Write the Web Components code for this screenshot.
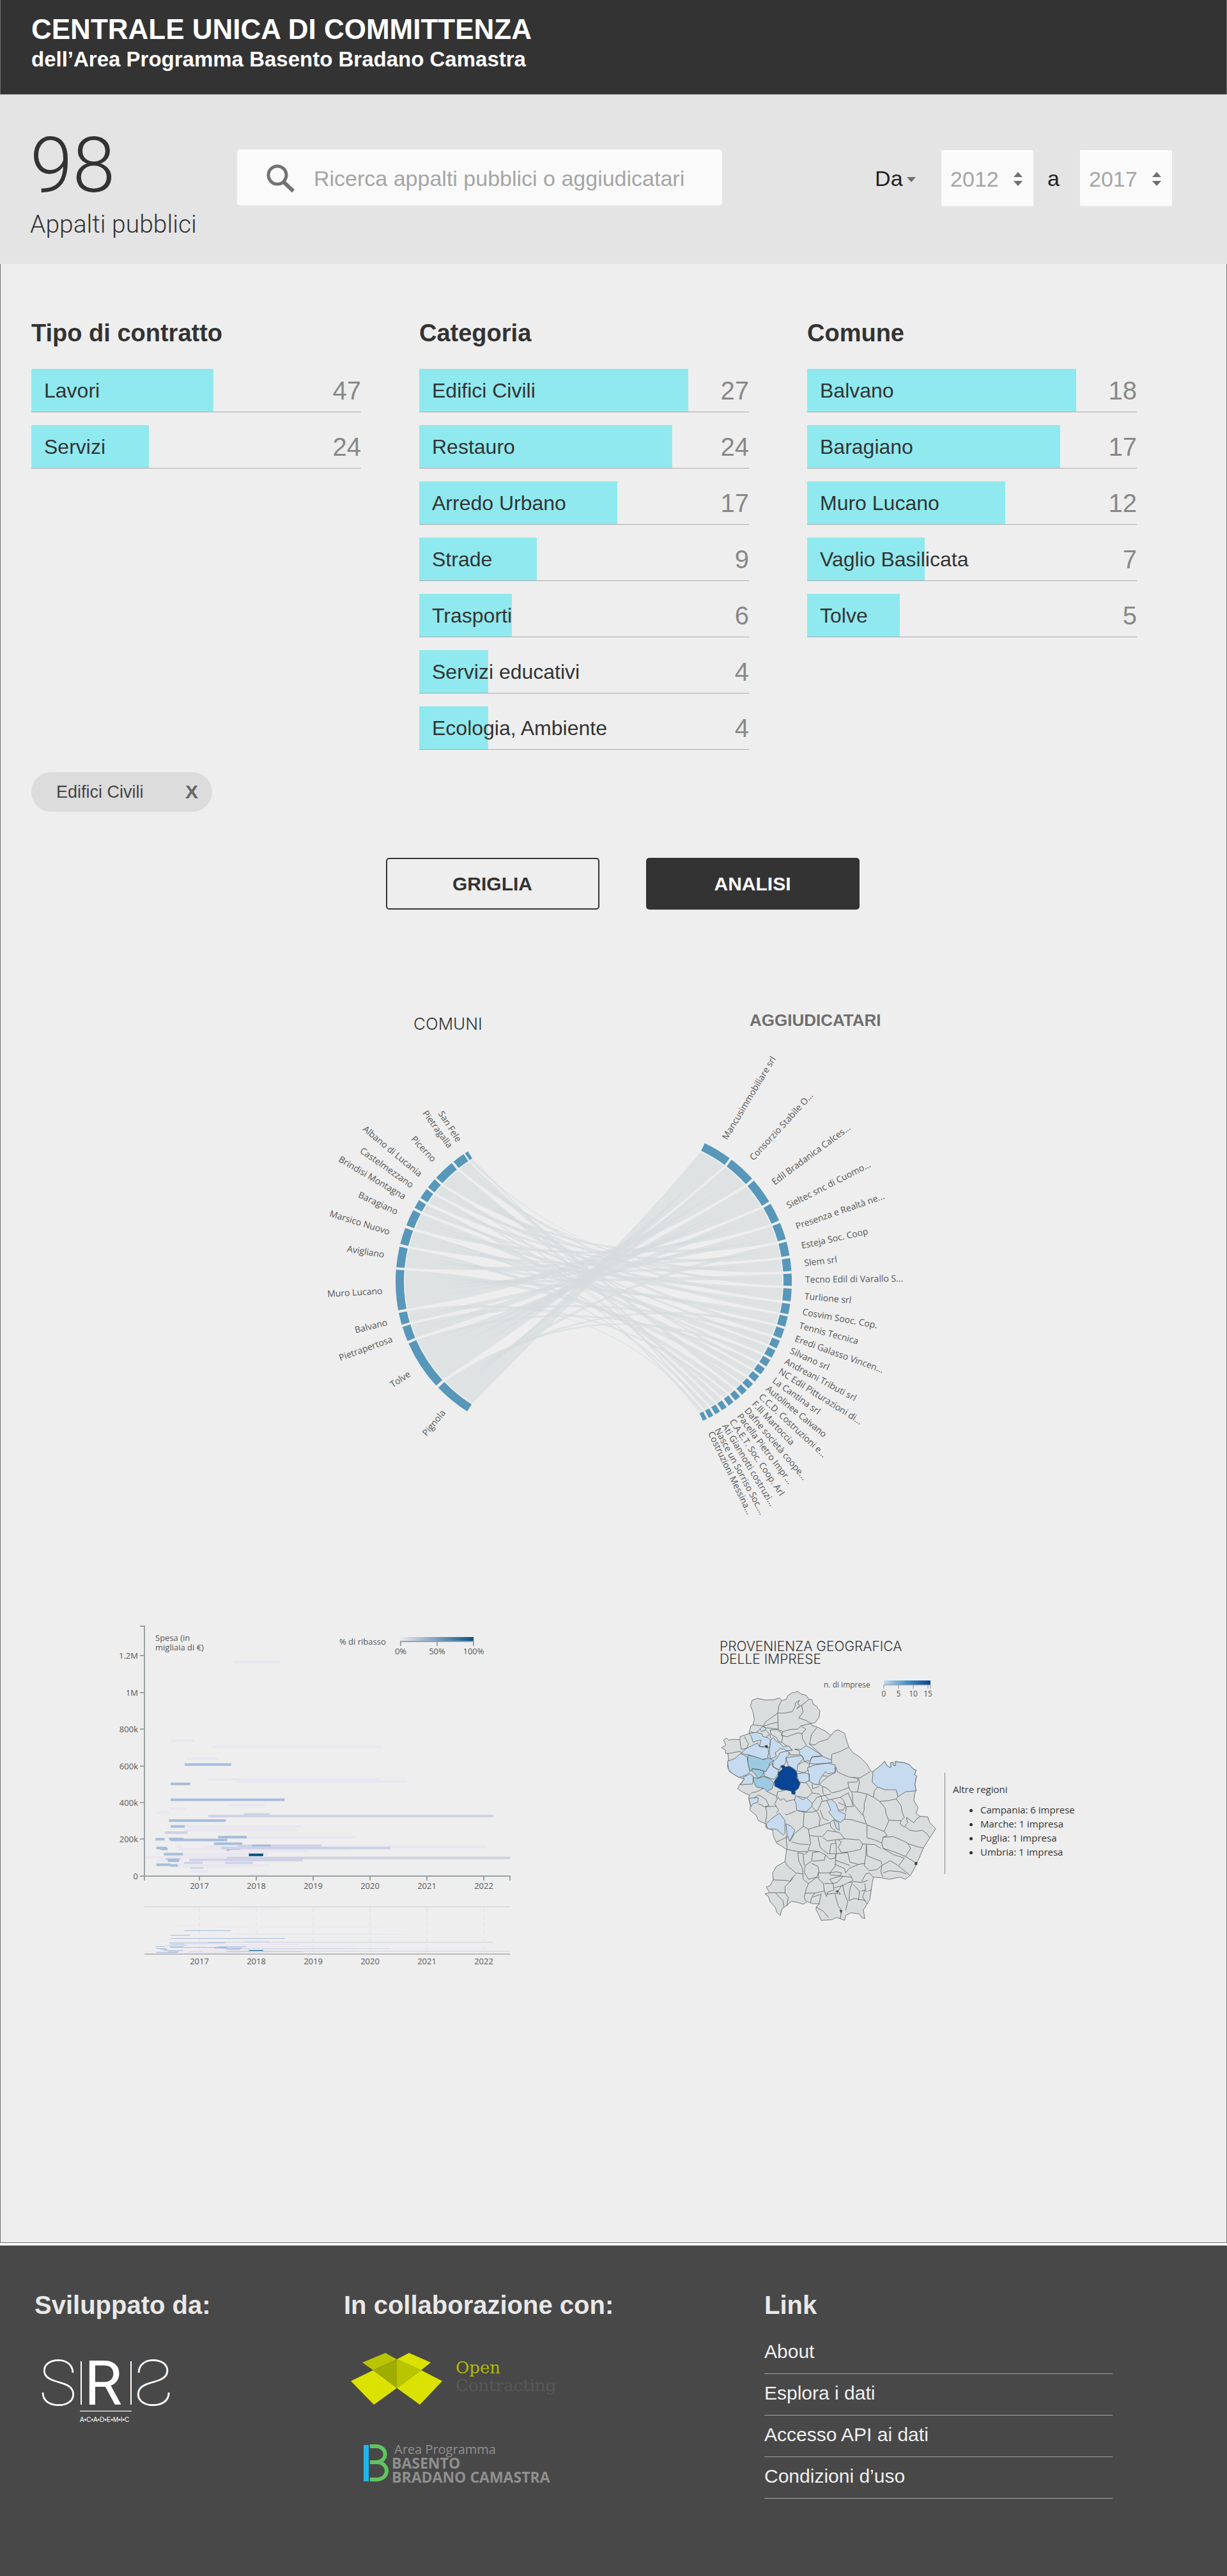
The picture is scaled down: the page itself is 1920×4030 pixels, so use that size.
<!DOCTYPE html>
<html lang="it">
<head>
<meta charset="utf-8">
<meta name="viewport" content="width=device-width, initial-scale=1">
<title>Centrale Unica di Committenza</title>
<style>
  body { margin: 0; background: #fff; color: #333; font-family: "Liberation Sans", Arial, sans-serif; }
</style>
</head>
<body>
<cuc-page>
  <cuc-header>
    <span slot="title">CENTRALE UNICA DI COMMITTENZA</span>
    <span slot="subtitle">dell’Area Programma Basento Bradano Camastra</span>
  </cuc-header>
  <stats-bar>
    <stat-figure slot="stat" value="98">Appalti pubblici</stat-figure>
    <search-box slot="search" placeholder="Ricerca appalti pubblici o aggiudicatari"></search-box>
    <year-range slot="range" from="2012" to="2017"></year-range>
  </stats-bar>
  <cuc-main>
    <facet-list slot="facets" heading="Tipo di contratto">
      <facet-row count="47" share="55.2">Lavori</facet-row>
      <facet-row count="24" share="35.7">Servizi</facet-row>
    </facet-list>
    <facet-list slot="facets" heading="Categoria">
      <facet-row count="27" share="81.6">Edifici Civili</facet-row>
      <facet-row count="24" share="76.7">Restauro</facet-row>
      <facet-row count="17" share="60.1">Arredo Urbano</facet-row>
      <facet-row count="9" share="35.7">Strade</facet-row>
      <facet-row count="6" share="28.1">Trasporti</facet-row>
      <facet-row count="4" share="20.9">Servizi educativi</facet-row>
      <facet-row count="4" share="20.9">Ecologia, Ambiente</facet-row>
    </facet-list>
    <facet-list slot="facets" heading="Comune">
      <facet-row count="18" share="81.6">Balvano</facet-row>
      <facet-row count="17" share="76.7">Baragiano</facet-row>
      <facet-row count="12" share="60.1">Muro Lucano</facet-row>
      <facet-row count="7" share="35.7">Vaglio Basilicata</facet-row>
      <facet-row count="5" share="28.1">Tolve</facet-row>
    </facet-list>
    <filter-chip slot="chips">Edifici Civili</filter-chip>
    <view-button slot="views">GRIGLIA</view-button>
    <view-button slot="views" active>ANALISI</view-button>
    <chord-chart slot="chord"></chord-chart>
    <spend-chart slot="panels"></spend-chart>
    <origin-map slot="panels"></origin-map>
  </cuc-main>
  <cuc-footer></cuc-footer>
</cuc-page>

<script>
const define = (name, css, html, ready) => {
  const template = document.createElement('template');
  template.innerHTML = `<style>*{box-sizing:border-box}:host{display:block}${css}</style>${html}`;
  customElements.define(name, class extends HTMLElement {
    constructor() {
      super();
      this.attachShadow({ mode: 'open' }).append(template.content.cloneNode(true));
    }
    connectedCallback() { if (ready) ready(this, this.shadowRoot); }
  });
};

define('cuc-page', `:host{display:flex;flex-direction:column}`, `<slot></slot>`);

define('cuc-header', `
  header{background:#333;color:#fff;border:1px solid #707070;border-top:0;padding:21px 48px 32px;font-weight:700}
  h1,p{margin:0;font-weight:700}
  h1{font-size:44px;line-height:50px}
  p{font-size:33px;line-height:44px}`,
  `<header><h1><slot name="title"></slot></h1><p><slot name="subtitle"></slot></p></header>`);

define('stats-bar', `
  section{display:flex;align-items:flex-start;background:#e4e4e4;padding:51px 86px 38px 47px}
  .stat{flex:0 0 324px}
  .search{flex:0 1 759px;padding-top:35px}
  .range{margin-left:auto;padding-top:36px}`,
  `<section><div class="stat"><slot name="stat"></slot></div>
   <div class="search"><slot name="search"></slot></div>
   <div class="range"><slot name="range"></slot></div></section>`);

define('stat-figure', `
  :host{font-family:Roboto,"Liberation Sans",sans-serif;font-weight:300;color:#333}
  .value{font-size:120px;line-height:120px}
  .label{font-size:39px;line-height:48px;margin-top:8px;white-space:nowrap}`,
  `<div class="value"></div><div class="label"><slot></slot></div>`,
  (el, root) => { root.querySelector('.value').textContent = el.getAttribute('value'); });

define('search-box', `
  form{display:flex;align-items:center;gap:28px;height:88px;padding:0 12px 0 46px;background:#fafafa;
    border-top:2px solid #fff;border-bottom:1px solid #ededed;border-radius:5px}
  svg{flex:none;display:block}
  input{appearance:none;flex:1;min-width:0;border:0;padding:0;background:none;outline:0;color:#333;
    font:34px/40px "Liberation Sans",Arial,sans-serif}
  input::placeholder{color:#a5a5a5;opacity:1}`,
  `<form role="search"><svg width="46" height="44" viewBox="0 0 46 44" fill="none" stroke="#727272">
     <circle cx="17" cy="17" r="14" stroke-width="5"/><path d="M27 28 42 42" stroke-width="6"/></svg>
   <input type="search" aria-label="Ricerca"></form>`,
  (el, root) => { root.querySelector('input').placeholder = el.getAttribute('placeholder'); });

define('year-range', `
  :host{font-size:34px;color:#222}
  form{display:flex;align-items:center}
  .mode{position:relative;margin-right:40px}
  select{appearance:none;border:0;background:none;margin:0;padding:0 20px 0 0;color:inherit;
    font:34px/40px "Liberation Sans",Arial,sans-serif}
  .mode svg{position:absolute;right:0;top:18px}
  .year{display:flex;align-items:center;justify-content:space-between;width:144px;height:88px;
    padding:0 17px 0 14px;background:#fafafa;border-top:2px solid #fff;border-bottom:1px solid #ededed;border-radius:2px}
  input{appearance:textfield;width:80px;border:0;padding:0;margin:0;background:none;color:#a5a5a5;
    font:34px/40px "Liberation Sans",Arial,sans-serif}
  input::-webkit-inner-spin-button{appearance:none;margin:0}
  label{padding:0 32px 0 22px}
  svg{display:block;fill:#707070}`,
  `<form><div class="mode"><select aria-label="Intervallo"><option>Da</option></select>
     <svg width="14" height="8"><path d="M0 0H14L7 8Z"/></svg></div>
   <div class="year"><input type="number" class="from" aria-label="Anno iniziale">
     <svg width="14" height="22"><path d="M0 8H14L7 0ZM0 14H14L7 22Z"/></svg></div>
   <label for="to">a</label>
   <div class="year"><input type="number" class="to" id="to">
     <svg width="14" height="22"><path d="M0 8H14L7 0ZM0 14H14L7 22Z"/></svg></div></form>`,
  (el, root) => {
    root.querySelector('.from').value = el.getAttribute('from');
    root.querySelector('.to').value = el.getAttribute('to');
  });

define('cuc-main', `
  main{background:#eee;border:1px solid #707070;border-top:0;padding:86px 0 418px}
  .facets{display:grid;grid-template-columns:repeat(3,1fr);gap:91px;padding:0 140px 0 48px}
  .chips{display:flex;gap:20px;margin:35px 48px 0}
  .views{display:flex;justify-content:center;gap:73px;margin-top:72px;padding-left:28px}
  .chord{margin-top:137px}
  .panels{display:flex;align-items:flex-start;gap:295px;margin-top:130px;padding-left:169px}`,
  `<main><div class="facets"><slot name="facets"></slot></div>
   <div class="chips"><slot name="chips"></slot></div>
   <div class="views"><slot name="views"></slot></div>
   <div class="chord"><slot name="chord"></slot></div>
   <div class="panels"><slot name="panels"></slot></div></main>`);

define('facet-list', `
  h2{margin:0 0 34px;font-size:38px;line-height:44px}
  .rows{display:flex;flex-direction:column;gap:20px}`,
  `<section><h2></h2><div class="rows"><slot></slot></div></section>`,
  (el, root) => { root.querySelector('h2').textContent = el.getAttribute('heading'); });

define('facet-row', `
  button{display:flex;align-items:center;justify-content:space-between;width:100%;height:68px;margin:0;
    padding:0 0 0 20px;border:0;border-bottom:1px solid #aaa;color:#333;cursor:pointer;text-align:left;
    background:linear-gradient(#90e9ee,#90e9ee) no-repeat 0 0/var(--share) 100%;
    font:32px/40px "Liberation Sans",Arial,sans-serif}
  .count{font-size:40px;color:#888}`,
  `<button type="button"><span><slot></slot></span><span class="count"></span></button>`,
  (el, root) => {
    root.querySelector('.count').textContent = el.getAttribute('count');
    el.style.setProperty('--share', el.getAttribute('share') + '%');
  });

define('filter-chip', `
  .chip{display:flex;align-items:center;justify-content:space-between;width:283px;height:62px;
    padding:0 22px 0 39px;border-radius:31px;background:#dcdcdc;color:#444;font-size:27px;line-height:32px}
  button{border:0;background:none;padding:0;margin:0;color:#666;cursor:pointer;
    font:700 30px/32px "Liberation Sans",Arial,sans-serif}`,
  `<div class="chip"><span><slot></slot></span><button type="button" aria-label="Rimuovi">X</button></div>`);

define('view-button', `
  button{display:block;width:334px;height:81px;margin:0;padding:0;border:2px solid #333;border-radius:5px;
    background:none;color:#333;cursor:pointer;font:700 30px/40px "Liberation Sans",Arial,sans-serif}
  :host([active]) button{background:#333;color:#fff}`,
  `<button type="button"><slot></slot></button>`);

/* Two facing arcs, one for the municipalities and one for the contractors, joined by ribbons. */
const TOWNS = [
  ['San Fele', 31.9, 33.2], ['Pietragalla', 33.8, 38.5], ['Picerno', 39.4, 47.3], ['Albano di Lucania', 48.2, 52.1],
  ['Castelmezzano', 52.9, 56.9], ['Brindisi Montagna', 57.9, 61.2], ['Baragiano', 62.2, 68.4],
  ['Marsico Nuovo', 69.5, 75.8], ['Avigliano', 76.8, 84.6], ['Muro Lucano', 85.5, 100.8], ['Balvano', 101.8, 106.3],
  ['Pietrapertosa', 107.2, 112.8], ['Tolve', 113.8, 132.7], ['Pignola', 133.8, 147.8]];
const FIRMS = [
  ['Mancusimmobiliare srl', 25.6, 36.5], ['Consorzio Stabile O...', 37.4, 47.8], ['Edil Bradanica Calces...', 48.8, 58.5],
  ['Sieltec snc di Cuomo...', 59.5, 66.5], ['Presenza e Realtà ne...', 67.5, 73.9], ['Esteja Soc. Coop', 74.9, 80.2],
  ['Slem srl', 81.2, 86], ['Tecno Edil di Varallo S...', 87, 91.6], ['Turlione srl', 92.6, 97.4],
  ['Cosvim Sooc. Cop.', 98.4, 102.3], ['Tennis Tecnica', 103.2, 107.1], ['Eredi Galasso Vincen...', 108, 111.7],
  ['Silvano srl', 112.7, 115.8], ['Andreani Tributi srl', 116.7, 119.8], ['NC Edil Pitturazioni di...', 120.7, 123.6],
  ['La Cantina srl', 124.5, 127.2], ['Autolinee Caivano', 128.1, 130.7], ['C.C.D. Costruzioni e...', 131.7, 134.2],
  ['F.lli Martoccia', 135.1, 137.5], ['Dafne società coope...', 138.5, 140.8], ['Pacella Pietro Impr...', 141.7, 143.9],
  ['C.A.E.T. Soc. Coop. Arl', 144.9, 147], ['Ati Giannotti costruzi...', 147.9, 149.9],
  ['Nasce un Sorriso Soc....', 150.8, 152.7], ['Costruzioni Messina...', 153.5, 155.1]];
const FLOWS = [
  [[13, 7], [12, 3.9]], [[12, 5], [9, 4], [13, 1.4]], [[12, 4], [9, 3], [11, 2.7]], [[12, 3], [8, 2], [6, 2]],
  [[10, 2], [9, 2.4], [2, 2]], [[13, 2], [7, 1.3], [3, 2]], [[8, 2], [4, 1.9], [1, 1]], [[9, 2], [2, 1.6], [0, .6]],
  [[7, 2], [1, 1.4], [5, 1.4]], [[6, 2], [3, 1.9]], [[9, 2], [8, 1.9]], [[13, 1.6], [2, 2.3]], [[11, 1.5], [4, 1.6]],
  [[7, 3.1]], [[13, 1.4], [5, 1.5]], [[2, 1.3], [12, 1.4]], [[6, 2.6]], [[9, 2.5]], [[1, 2.4]], [[8, 2.3]],
  [[10, 1.2], [7, 1]], [[2, 2.1]], [[3, 1], [4, 1]], [[8, 1], [0, .9]], [[10, .6], [5, 1]]];

define('chord-chart', `
  svg{display:block;margin:0 auto;max-width:100%}
  .arc{fill:#5797ba}
  .ribbon{fill:#d6dcde;opacity:.66}
  .names{font:14px "Open Sans",sans-serif;fill:#555}
  .side{font:300 26px Inter,sans-serif;fill:#333}
  .bold{font:700 26px "Liberation Sans",Arial,sans-serif;fill:#6f6f6f}`,
  `<svg width="960" height="840" viewBox="480 1560 960 840" role="img" aria-label="Comuni e aggiudicatari"></svg>`,
  (el, root) => {
    const left = { x: 859, y: 2005, s: -1 }, right = { x: 999, y: 2005, s: 1 };
    const at = (c, deg, r) => {
      const a = deg * Math.PI / 180;
      return (c.x + c.s * Math.sin(a) * r).toFixed(1) + ' ' + (c.y - Math.cos(a) * r).toFixed(1);
    };
    const arc = (c, [, a, b]) => {
      const out = c.s > 0 ? 1 : 0;
      return `<path class="arc" d="M${at(c, a, 240)}A240 240 0 0 ${out} ${at(c, b, 240)}L${at(c, b, 227)}A227 227 0 0 ${1 - out} ${at(c, a, 227)}Z"/>`;
    };
    const label = (c, [name, a, b]) => {
      const turn = c.s * ((a + b) / 2 - 90);
      const [x, y] = at(c, (a + b) / 2, 261).split(' ');
      return `<text x="${x}" y="${y}" dy="5" text-anchor="${c.s > 0 ? 'start' : 'end'}" transform="rotate(${turn.toFixed(1)} ${x} ${y})">${name}</text>`;
    };
    const links = FLOWS.flatMap((list, firm) => list.map(([town, size]) => ({ firm, town, size })));
    const spread = (arcs, key, other) => arcs.forEach(([, a, b], i) => {
      const own = links.filter(l => l[key] === i).sort((p, q) => q[other] - p[other]);
      const total = own.reduce((sum, l) => sum + l.size, 0);
      let from = a;
      own.forEach(l => { const to = from + (b - a) * l.size / total; l[key + 'Span'] = [from, to]; from = to; });
    });
    spread(TOWNS, 'town', 'firm');
    spread(FIRMS, 'firm', 'town');
    const ribbons = links.map(l => {
      const [a, b] = l.townSpan, [c, d] = l.firmSpan, mid = 'Q929 2003 ';
      return `<path class="ribbon" d="M${at(left, a, 225)}${mid}${at(right, c, 225)}A225 225 0 0 1 ${at(right, d, 225)}${mid}${at(left, b, 225)}A225 225 0 0 1 ${at(left, a, 225)}Z"/>`;
    });
    root.querySelector('svg').innerHTML = ribbons.join('') +
      TOWNS.map(t => arc(left, t)).join('') + FIRMS.map(f => arc(right, f)).join('') +
      `<g class="names">${TOWNS.map(t => label(left, t)).join('')}${FIRMS.map(f => label(right, f)).join('')}</g>
       <text class="side" x="647" y="1611">COMUNI</text><text class="bold" x="1173" y="1605">AGGIUDICATARI</text>`;
  });

/* Contracts as bars: start, end, height on the plot grid, tone. */
const BARS = [
  [475,643,217,0],[247,333,549,0],[397,1011,575,0],[304,420,625,0],[297,465,650,2],[383,1003,713,0],[483,1099,722,0],
  [247,317,732,2],[247,658,799,2],[451,587,821,0],[242,303,836,0],[194,243,853,0],[511,604,861,1],[383,1410,868,1],
  [241,446,887,2],[297,716,912,0],[247,297,912,2],[293,704,928,0],[225,308,938,1],[505,915,959,0],[418,521,957,2],
  [192,225,966,2],[241,293,965,2],[247,451,969,2],[403,505,985,2],[262,290,996,0],[365,1387,998,0],[487,790,994,1],
  [540,608,994,2],[278,890,1008,0],[448,497,1010,2],[428,1041,1003,1],[195,231,1003,2],[210,236,1007,2],
  [459,740,1016,0],[290,595,1029,0],[222,291,1029,2],[529,581,1032,3],[195,290,1056,0],[236,277,1057,2],[228,282,1046,2],
  [152,448,1042,0],[448,1472,1045,1],[314,723,1054,1],[295,362,1067,1],[443,543,1067,1],[362,443,1062,0],
  [195,247,1074,2],[246,273,1077,2],[273,603,1076,0],[317,365,1084,2],[295,500,1081,0],[314,382,1102,0],[528,595,1115,0]];

define('spend-chart', `
  :host{flex:none}
  svg{display:block;font:13px "Open Sans",sans-serif;fill:#555}
  .axis{fill:none;stroke:#9aa2a3;stroke-width:2}
  .t0{fill:#e9e6f1}.t1{fill:#cfd1e6}.t2{fill:#a6bddb}.t3{fill:#045382}
  .end{text-anchor:end}.mid{text-anchor:middle}`,
  `<svg width="650" height="560" viewBox="170 2530 650 560" role="img" aria-label="Spesa nel tempo"></svg>`,
  (el, root) => {
    const x = v => 160 + v / 2.306, y = v => 2520 + v / 2.703;
    const years = [2017, 2018, 2019, 2020, 2021, 2022].map((n, i) => [n, 312 + 89 * i]);
    const ticks = [['1.2M', 2590], ['1M', 2648], ['800k', 2705], ['600k', 2763], ['400k', 2820], ['200k', 2877], ['0', 2935]];
    const bar = (a, b, t, top, h) => `<rect class="t${t}" x="${x(a).toFixed(1)}" y="${top}" width="${((b - a) / 2.306).toFixed(1)}" height="${h}"/>`;
    const big = BARS.map(([a, b, v, t]) => bar(a, b, t, (y(v) - 2).toFixed(1), 4));
    const small = BARS.map(([a, b, v, t]) => bar(a, b, t, Math.round(2985 + (y(v) - 2600) * .218), 1));
    root.querySelector('svg').innerHTML = `
      <defs><linearGradient id="tone"><stop stop-color="#ece7f2"/><stop offset=".5" stop-color="#7d9fc2"/><stop offset="1" stop-color="#045382"/></linearGradient></defs>
      ${big.join('')}
      <path class="axis" d="M219 2544H226V2942M219 2935H798V2942${ticks.slice(0, 6).map(t => `M219 ${t[1]}H226`).join('')}${years.map(n => `M${n[1]} 2935V2942`).join('')}"/>
      ${ticks.map(t => `<text class="end" x="216" y="${t[1] + 5}">${t[0]}</text>`).join('')}
      ${years.map(n => `<text class="mid" x="${n[1]}" y="2955">${n[0]}</text><text class="mid" x="${n[1]}" y="3073">${n[0]}</text>`).join('')}
      <text x="243" y="2567">Spesa (in</text><text x="243" y="2582">migliaia di €)</text>
      <text x="531" y="2573">% di ribasso</text>
      <rect x="627" y="2561" width="114" height="6" fill="url(#tone)"/>
      <path class="axis" d="M627 2575V2568H741V2575M684 2568V2575"/>
      <text class="mid" x="627" y="2588">0%</text><text class="mid" x="684" y="2588">50%</text><text class="mid" x="741" y="2588">100%</text>
      <path d="M226 2983H798" stroke="#ddd" stroke-width="2"/>
      <path d="${years.map(n => `M${n[1]} 2984V3057`).join('')}" stroke="#dfe2e2" stroke-dasharray="7 5"/>
      ${small.join('')}
      <path d="M226 3057H798" stroke="#bbb" stroke-width="2"/>`;
  });

define('origin-map', `
  :host{flex:none;margin-top:36px;color:#333}
  h3{margin:0 0 14px;padding-left:11px;font:300 21px/20px Inter,sans-serif;color:#333}
  .row{display:flex;align-items:flex-start}
  svg{display:block;font:12px "Open Sans",sans-serif;fill:#555}
  .mid{text-anchor:middle}
  g{stroke:#555a5c;stroke-width:3;stroke-linejoin:round;stroke-opacity:.8}
  .land{fill:#d9dddd}.few{fill:#c6dbef}.some{fill:#9ecae1}.many{fill:#084594}.edge{fill:none}
  aside{margin:153px 0 0 3px;padding:15px 0 24px 12px;border-left:1px solid #888;
    font:15px/22px "Open Sans",sans-serif}
  p{margin:0 0 10px}
  ul{margin:0;padding-left:43px}`,
  `<h3>PROVENIENZA GEOGRAFICA<br>DELLE IMPRESE</h3>
  <div class="row">
  <svg width="360" height="395" viewBox="0 0 360 395" role="img" aria-label="Mappa della Basilicata">
    <defs><linearGradient id="blues"><stop stop-color="#c6dbef"/><stop offset=".5" stop-color="#4292c6"/><stop offset="1" stop-color="#084594"/></linearGradient></defs>
    <text x="174" y="20">n. di imprese</text>
    <rect x="268" y="9" width="73" height="7" fill="url(#blues)"/>
    <path d="M268 22V16H341V22M291 16V22M314 16V22M337 16V22" fill="none" stroke="#8a9496"/>
    <text class="mid" x="268" y="34">0</text><text class="mid" x="291" y="34">5</text><text class="mid" x="314" y="34">10</text><text class="mid" x="337" y="34">15</text>
    <g transform="translate(0 15) scale(.33333)">
      <path class="land" d="M190 190 196 165 190 130 178 100 186 75 210 66 250 74 290 72 312 64 325 76 347 70 352 55 375 38 386 40 398 32 415 45 440 52 452 70 466 72 472 92 490 104 495 115 504 124 500 155 482 180 462 184 466 193 490 200 530 220 556 240 572 220 588 214 620 230 630 265 640 295 660 322 690 340 725 375 743 408 753 410 790 380 808 362 818 380 830 390 838 388 835 370 848 366 850 382 860 380 858 362 880 366 900 368 925 378 940 396 956 404 948 422 958 430 950 470 955 500 950 510 945 545 965 580 955 605 975 620 1010 622 1020 650 1048 678 1020 720 990 768 968 820 955 850 930 895 905 915 880 905 830 915 790 908 755 905 750 930 745 965 738 1010 720 1040 708 1060 715 1100 700 1095 690 1078 650 1072 625 1085 620 1108 595 1098 580 1095 560 1105 510 1108 500 1085 485 1055 490 1040 502 1030 470 1030 445 1020 425 1032 405 1025 370 1018 345 1040 325 1055 318 1085 302 1070 295 1048 270 1020 262 995 246 984 268 978 252 952 270 945 285 918 282 885 300 855 340 832 348 775 300 745 285 710 283 685 250 672 250 655 215 640 205 615 175 590 178 570 170 535 172 520 140 505 118 490 128 470 150 445 120 435 80 410 70 385 75 350 72 325 62 325 60 308 42 298 62 285 52 262 65 252 75 262 100 258 128 260 130 245 170 232 175 215 180 195Z"/>
      <path class="edge" d="M325 76 312 100 306 135 308 210M306 135 340 135 375 128 388 102 388 88 408 75 400 92 408 98 395 115 418 98 440 82 452 70M418 98 425 130 405 158 440 170 462 184M240 192 250 175 285 150 306 135M240 196 275 185 308 178M190 190 240 196 250 204 305 210 330 222 365 212 400 210 415 195 462 184M178 222 200 230 222 212M330 222 322 240 350 246 400 228 420 232 438 210 415 195M420 232 422 255 440 285M490 202 465 235 455 280 480 285 500 270 540 258 556 240M455 280 515 335M558 355 560 328 600 315 640 295M270 215 275 235 300 250 310 268 325 272 330 240 320 225 300 212ZM250 215 268 235 250 248M270 235 272 252M325 272 350 290 378 310M128 260 135 305 160 300 168 280 150 245M72 325 130 315 136 325M362 318 365 332 408 330M400 378 430 362 455 372 450 400 430 415 400 408M575 415 580 388 585 410 615 425 640 435 660 438 690 440 740 410M502 470 515 455 545 430 575 415M515 430 540 430M500 470 540 490 560 510 600 500 640 485 635 460 680 458M660 438 680 440 682 455M685 440 690 460 680 505 650 505 640 485M680 505 725 515 755 530 760 500 775 482M755 530 785 550 830 545 862 538 870 528M862 538 885 570 890 600 900 625 885 640 828 638M785 550 810 580 815 610 828 640 805 690M725 515 712 560 712 590 705 605 720 650 725 660 805 690M655 510 660 560 680 585 705 615M625 600 628 575 665 572M635 510 650 540 660 570M600 632 650 635 720 655M725 660 725 720 760 730 795 745 800 718 820 710 805 690M910 625 915 650 900 670 880 655 885 640M910 625 945 650 960 630 975 620M905 668 925 685 955 690 985 685 1005 700 1020 720M800 718 850 715 895 735 915 745 930 770 905 808 850 785 800 770 795 745M918 748 960 762 990 768M905 808 950 835M722 750 760 752 790 770M722 755 725 805 790 830 795 845M875 850 900 815 850 800 800 770M795 850 835 828 870 850 925 895M800 885 830 875 880 880 910 890M795 850 790 880 800 905M735 885 755 905M735 875 770 870 795 850M450 680 500 665 550 650 568 636M425 665 450 680 455 710 515 715 540 685 560 690 595 695 620 725M552 650 555 670 580 690M620 725 575 730 540 735 518 720M575 730 580 745 555 750 550 795M620 725 690 730 705 750 695 775 650 785 605 790 590 765 605 740 590 730M722 750 705 750M495 718 505 765 540 795 580 795 635 790M580 745 580 795M455 710 460 745 448 780 500 785M350 775 400 785 448 785M372 740 410 750 452 752M365 735 385 700 425 668 430 600 395 592M340 610 350 612 390 595M430 600 470 600 495 590M468 575 495 605 505 630 500 665M468 560 490 530 510 525 515 545 495 590M505 590 520 630 545 640M468 510 500 515 510 525 555 515M535 545 515 550M515 480 520 515 545 540M558 540 600 530 640 508M600 530 615 545 625 570M592 590 615 590 625 570 590 555M412 460 440 462 460 490 468 510 440 535 402 525M455 425 468 465 470 490 500 480M300 535 305 505 345 496M388 540 345 550 335 535 320 545 308 530 292 560 300 575 310 590 300 605M245 575 300 572M215 518 250 540 265 570 245 575 215 560M250 575 255 610 248 655M300 525 270 510 255 503M215 520 190 535M172 520 185 508 205 505 240 488M300 740 355 715M345 710 350 775M340 832 350 850 390 885 425 890M400 790 405 830 420 860 425 890M400 790 425 795 430 850M448 785 430 800M470 790 465 830 435 850 430 880 450 915 490 905 500 880 495 855 465 840M470 790 500 785 530 800 525 825 470 830M530 800 550 820 575 815 580 795M575 845 620 865 625 885M580 795 575 855 550 885 495 885M635 790 645 835 685 845 715 840M575 825 645 850M722 750 720 800 712 850 735 875M625 885 640 865 685 845M285 918 340 920 365 925 375 905M365 925 340 950 340 978M390 890 365 925M268 978 340 978M295 980 330 1015 335 1045M340 978 355 1000 350 1040M425 890 425 915 450 935 440 960 430 1000 440 1020M450 935 490 905 520 935 525 970 480 980 435 980M480 980 465 1000 460 1025M510 985 480 995 470 1000M510 985 500 1030M525 970 540 985 580 980M525 935 565 935 570 965 540 975M565 935 550 915 600 900 610 905 585 930ZM550 885 580 880 605 885 600 898 555 895ZM495 885 500 910M610 940 620 985 635 1020M575 985 590 1040 605 1060 600 1100M635 1020 625 1060M605 900 650 905 660 920 610 945 570 955M640 890 655 905M655 935 645 960 640 1015 665 1005 720 1015M660 925 700 930 730 920M700 925 720 890 735 885M660 940 690 970 685 1015M700 970 715 965 705 1000 725 1030M730 970 745 965M715 935 720 975M485 1045 520 1065 545 1095M525 975 535 995 542 975M605 945 590 970 600 985 575 980M640 930 660 930"/>
      <path class="few" d="M222 210 235 198 250 204 248 215 230 222ZM172 230 205 226 232 232 236 245 262 252 272 262 268 300 250 290 235 296 220 290 228 262 205 266 190 272 182 245ZM136 320 160 300 212 275 220 292 258 292 264 320 258 342 265 348 232 352 200 340 165 330 150 328ZM272 262 285 250 300 268 318 278 330 292 360 290 372 310 345 312 335 302 325 305 318 298 310 310 295 320 298 340 272 350 266 320ZM318 320 355 312 360 330 344 345 345 365 335 380 320 385 315 402 300 395 283 385 285 360 300 350ZM70 362 105 348 132 325 162 340 166 370 176 410 160 425 125 437 95 420 75 400ZM242 410 250 400 270 378 280 370 284 388 310 402 305 425 290 446 268 440 242 430ZM130 472 150 445 142 438 176 420 192 432 188 468 150 470ZM345 345 385 338 420 335 425 350 412 365 400 378 396 410 375 392 355 382ZM385 305 415 305 440 288 470 305 515 335 470 340 455 360 430 360 425 342 410 330 408 312ZM465 342 515 338 558 355 560 368 480 375 455 370ZM445 392 480 378 545 370 575 378 575 415 540 420 530 410 515 430 502 450 500 470 480 470 455 455 452 420ZM396 420 435 415 455 425 452 455 430 462 405 458ZM753 410 790 380 808 362 818 380 830 390 838 388 835 370 848 366 850 382 860 380 858 362 880 366 900 368 925 378 940 396 956 404 948 422 958 430 950 470 955 500 905 505 870 528 862 495 810 495 775 482 750 460ZM390 522 425 542 440 530 468 560 465 575 440 598 395 592 392 560 385 545ZM535 545 558 540 580 560 592 595 625 610 620 632 600 648 575 635 545 600 555 590 545 565ZM568 636 592 650 595 685 580 675ZM170 535 215 532 212 555 190 560 180 575ZM252 655 275 632 315 605 340 640 340 700 332 708 300 680 258 678ZM345 655 368 665 386 685 375 710 362 738 350 705Z"/>
      <path class="some" d="M166 332 200 340 240 354 262 345 288 358 268 370 265 385 250 410 225 402 188 396 176 410 166 370ZM188 396 225 402 242 410 232 430 212 442 200 420 184 408ZM190 436 212 442 240 432 270 445 288 462 280 490 255 503 240 488 205 482 195 460Z"/>
      <path class="many" d="M320 382 335 380 342 388 360 385 385 400 396 415 396 440 412 465 402 490 388 500 388 517 372 515 370 502 345 496 325 495 292 478 290 455 308 430 308 415 328 398Z"/>
      <path fill="#333" d="M248 287H258V297H248ZM950 835H960V847H950ZM578 970 590 968 588 978ZM597 1060 608 1062 604 1075Z"/>
    </g>
  </svg>
  <aside><p>Altre regioni</p><ul><li>Campania: 6 imprese</li><li>Marche: 1 impresa</li><li>Puglia: 1 impresa</li><li>Umbria: 1 impresa</li></ul></aside>
  </div>`);

define('cuc-footer', `
  :host{margin-top:4px}
  footer{display:grid;grid-template-columns:484fr 658fr 545fr;background:#484848;color:#e8e8e8;padding:70px 179px 121px 54px}
  h2{margin:0 0 20px;font-size:40px;line-height:46px}
  ul{list-style:none;margin:0;padding:0}
  li{padding:13px 0 17px;border-bottom:1px solid #a5a5a5;font-size:30px;line-height:34px}
  a{color:#f0f0f0;text-decoration:none}
  svg{display:block}
  .siris{margin-top:35px}
  .partners{display:flex;flex-direction:column;gap:45px;margin-top:46px}
  .thin{font:100 100px Roboto,sans-serif}`,
  `<footer>
    <section><h2>Sviluppato da:</h2>
      <svg class="siris" width="230" height="140" viewBox="54 3664 230 140" fill="#fff" role="img" aria-label="SIRIS Academic">
        <text class="thin" x="61" y="3763">S</text>
        <text font-family="Roboto, sans-serif" font-size="96" x="132" y="3762">R</text>
        <text class="thin" transform="translate(270 3763) scale(-1 1)">S</text>
        <path d="M127 3694V3762M205 3694V3762" stroke="#fff" stroke-width="2"/>
        <path d="M125 3772H206" stroke="#b5b5b5" stroke-width="2"/>
        <text font-family="Liberation Sans, sans-serif" font-size="10" x="125" y="3789">A•C•A•D•E•M•I•C</text>
      </svg></section>
    <section><h2>In collaborazione con:</h2>
      <div class="partners">
      <svg width="350" height="95" viewBox="0 0 350 95" role="img" aria-label="Open Contracting">
        <g transform="translate(11 6)">
          <path fill="#dbe200" d="M91 0 125 15 110 27 72 10ZM35 27 72 55 36 81 0 44ZM110 27 143 44 108 81 72 55Z"/>
          <path fill="#b9c500" d="M54 0 72 10 35 27 18 15ZM72 10 110 27 72 55Z"/>
          <path fill="#9fac00" d="M72 10V55L35 27Z"/>
        </g>
        <g font-family="DejaVu Serif, serif" font-size="26"><text x="175" y="38" fill="#b0bb00">Open</text><text x="175" y="66" fill="#585858">Contracting</text></g>
      </svg>
      <svg width="350" height="80" viewBox="0 0 350 80" role="img" aria-label="Area Programma Basento Bradano Camastra">
        <path fill="#1fb5ee" d="M31 10H39V67H31Z"/>
        <path fill="none" stroke="#5fc55f" stroke-width="6" d="M41 12H51C69 13 69 35 52 37H41M52 37C72 38 72 63 52 64H41"/>
        <g font-family="Open Sans, sans-serif" fill="#8f8f8f"><text x="79" y="24" font-size="20">Area Programma</text>
        <g font-weight="700" font-size="23"><text x="75" y="47">BASENTO</text><text x="75" y="69">BRADANO CAMASTRA</text></g></g>
      </svg></div></section>
    <section><h2>Link</h2><ul>
      <li><a href="#about">About</a></li><li><a href="#dati">Esplora i dati</a></li>
      <li><a href="#api">Accesso API ai dati</a></li><li><a href="#condizioni">Condizioni d’uso</a></li></ul></section>
  </footer>`);
</script>
</body>
</html>
